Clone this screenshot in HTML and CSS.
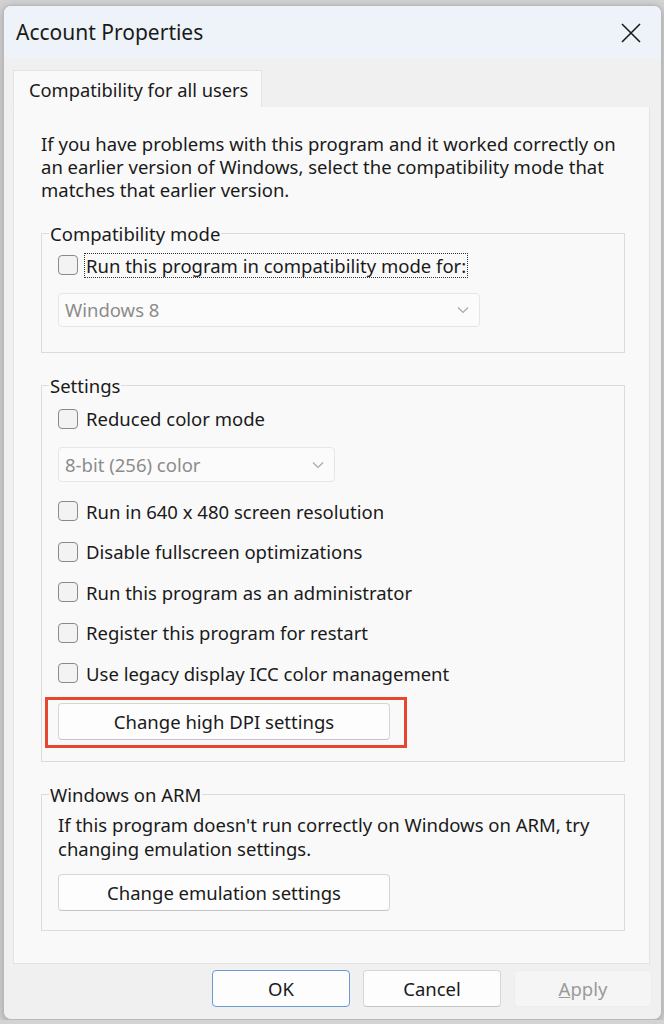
FILE: index.html
```html
<!DOCTYPE html>
<html lang="en">
<head>
    <meta charset="UTF-8">
    <title>Account Properties</title>
    <link rel="stylesheet" href="styles.css">
</head>
<body>
    <div class="window">
        <div class="titlebar">
            <span class="title">Account Properties</span>
            <svg class="close" width="20" height="20" viewBox="0 0 20 20">
                <path d="M1 1 L19 19 M19 1 L1 19" stroke="#1b1b1b" stroke-width="1.6" fill="none"/>
            </svg>
        </div>

        <div class="content">
            <div class="tabs">
                <div class="tab">Compatibility for all users</div>
            </div>

            <div class="panel">
                <p class="intro">If you have problems with this program and it worked correctly on an earlier version of Windows, select the compatibility mode that matches that earlier version.</p>

                <fieldset class="group group-compat">
                    <legend>Compatibility mode</legend>
                    <div class="check-row">
                        <span class="box"></span>
                        <span class="label focused">Run this program in compatibility mode for:</span>
                    </div>
                    <div class="select select-wide">
                        <span>Windows 8</span>
                        <svg width="12" height="8" viewBox="0 0 12 8"><path d="M1 1.5 L6 6.5 L11 1.5" stroke="#a8a8a8" stroke-width="1.2" fill="none"/></svg>
                    </div>
                </fieldset>

                <fieldset class="group group-settings">
                    <legend>Settings</legend>
                    <div class="check-row first">
                        <span class="box"></span>
                        <span class="label">Reduced color mode</span>
                    </div>
                    <div class="select select-narrow">
                        <span>8-bit (256) color</span>
                        <svg width="12" height="8" viewBox="0 0 12 8"><path d="M1 1.5 L6 6.5 L11 1.5" stroke="#a8a8a8" stroke-width="1.2" fill="none"/></svg>
                    </div>
                    <div class="check-row spaced">
                        <span class="box"></span>
                        <span class="label">Run in 640 x 480 screen resolution</span>
                    </div>
                    <div class="check-row">
                        <span class="box"></span>
                        <span class="label">Disable fullscreen optimizations</span>
                    </div>
                    <div class="check-row">
                        <span class="box"></span>
                        <span class="label">Run this program as an administrator</span>
                    </div>
                    <div class="check-row">
                        <span class="box"></span>
                        <span class="label">Register this program for restart</span>
                    </div>
                    <div class="check-row">
                        <span class="box"></span>
                        <span class="label">Use legacy display ICC color management</span>
                    </div>
                    <div class="highlight">
                        <button class="btn btn-wide">Change high DPI settings</button>
                    </div>
                </fieldset>

                <fieldset class="group">
                    <legend>Windows on ARM</legend>
                    <p class="arm-text">If this program doesn't run correctly on Windows on ARM, try changing emulation settings.</p>
                    <button class="btn btn-wide">Change emulation settings</button>
                </fieldset>
            </div>
        </div>

        <div class="footer">
            <button class="btn btn-dialog btn-default">OK</button>
            <button class="btn btn-dialog">Cancel</button>
            <button class="btn btn-dialog btn-disabled"><u>A</u>pply</button>
        </div>
    </div>
</body>
</html>
```

FILE: styles.css
```css
body {
    margin: 0;
    background-color: #d3d3d3;
    font-family: "Noto Sans", "Open Sans", sans-serif;
    color: #1a1a1a;
}
.window {
    margin: 5px 2px 0 3px;
    width: 659px;
    height: 1015px;
    background-color: #f0f0f0;
    border: 1px solid #b9b9b9;
    border-radius: 8px;
    box-sizing: border-box;
    overflow: hidden;
    display: flex;
    flex-direction: column;
    box-shadow: 0 2px 8px rgba(0, 0, 0, 0.25);
}
.titlebar {
    height: 52px;
    background-color: #eef3f9;
    display: flex;
    align-items: center;
    justify-content: space-between;
    padding: 0 20px 0 12px;
}
.title {
    font-size: 21px;
}
.close {
    display: block;
    margin-top: 2px;
}
.content {
    padding: 12px 11px 0 9px;
}
.tabs {
    display: flex;
}
.tab {
    background-color: #f9f9f9;
    border: 1px solid #e3e3e3;
    border-bottom: none;
    height: 36px;
    padding: 0 13px 0 15px;
    display: flex;
    align-items: center;
    font-size: 18.3px;
}
.panel {
    background-color: #f9f9f9;
    border: 1px solid #e3e3e3;
    border-top-color: #f9f9f9;
    padding: 24px 24px 33px 27px;
    height: 857px;
    box-sizing: border-box;
}
.intro {
    margin: 0;
    font-size: 18.5px;
    line-height: 23px;
}
.group {
    margin: 21px 0 0 0;
    border: 1px solid #dcdcdc;
    padding: 0 16px 19px 16px;
    font-size: 18.5px;
}
.group-compat {
    padding-bottom: 25px;
}
.group-settings {
    padding-bottom: 21px;
}
.group legend {
    padding: 0 1px;
    margin-left: -9px;
    line-height: 23px;
}
.check-row {
    height: 40.5px;
    display: flex;
    align-items: center;
    gap: 8px;
}
.check-row.first {
    margin-top: 2px;
}
.check-row.spaced {
    margin-top: 9px;
}
.box {
    width: 18px;
    height: 18px;
    border: 1px solid #8a8a8a;
    border-radius: 4px;
    background-color: #f3f3f3;
    flex-shrink: 0;
}
.label {
    line-height: 23px;
}
.focused {
    outline: 1px dotted #333;
    outline-offset: 0;
    padding: 0 1px;
    margin-left: -1px;
}
.select {
    height: 34px;
    border: 1px solid #e6e6e6;
    border-radius: 4px;
    background-color: #fbfbfb;
    box-sizing: border-box;
    display: flex;
    align-items: center;
    justify-content: space-between;
    padding: 0 10px 0 6px;
    color: #8c8c8c;
    margin-top: 7px;
}
.select-wide {
    width: 422px;
}
.select-narrow {
    width: 277px;
    height: 35px;
    margin-top: 8px;
}
.btn {
    font-family: inherit;
    font-size: 18.5px;
    color: #1a1a1a;
    background-color: #fdfdfd;
    border: 1px solid #d6d6d6;
    border-bottom-color: #c4c4c4;
    border-radius: 4px;
    height: 37px;
    padding: 0;
}
.btn-wide {
    width: 332px;
    display: block;
}
.highlight {
    width: 332px;
    border: 3px solid #e8472f;
    padding: 3px 14px 5px 10px;
    margin: 3px 0 -8px -13px;
}
.arm-text {
    margin: 7px 0 13px 0;
    line-height: 24px;
}
.footer {
    display: flex;
    justify-content: flex-end;
    gap: 13px;
    padding: 6px 9px 0 0;
}
.btn-dialog {
    width: 138px;
}
.btn-default {
    border: 1px solid #6a9ad8;
}
.btn-disabled {
    background-color: #f5f5f5;
    border-color: #eeeeee;
    color: #9a9a9a;
}
```
